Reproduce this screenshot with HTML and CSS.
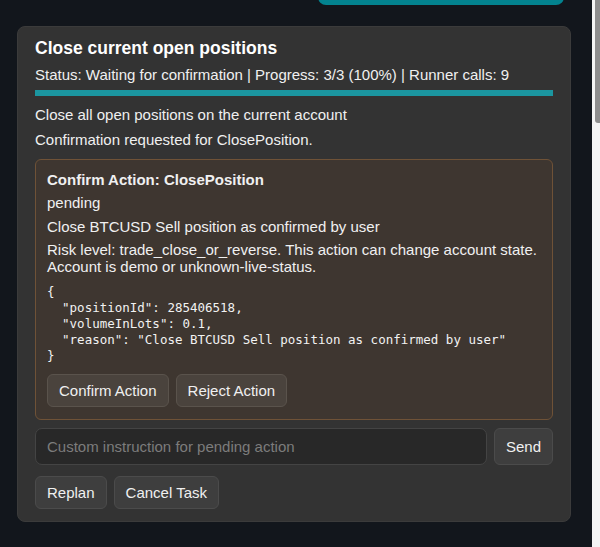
FILE: index.html
```html
<!DOCTYPE html>
<html>
<head>
    <title>Task Runner</title>
    <link rel="stylesheet" href="styles.css">
</head>
<body>
    <div class="page">
        <div class="main">
            <div class="top-bar">
                <div class="primary"></div>
            </div>

            <div class="task-card">
                <h2 class="task-title">Close current open positions</h2>
                <div class="task-status">Status: Waiting for confirmation | Progress: 3/3 (100%) | Runner calls: 9</div>
                <div class="progress"><div class="progress-fill" style="width: 100%"></div></div>
                <div class="task-text">Close all open positions on the current account</div>
                <div class="task-text">Confirmation requested for ClosePosition.</div>

                <div class="confirm-box">
                    <div class="confirm-title">Confirm Action: ClosePosition</div>
                    <div>pending</div>
                    <div>Close BTCUSD Sell position as confirmed by user</div>
                    <div>Risk level: trade_close_or_reverse. This action can change account state. Account is demo or unknown-live-status.</div>
<pre class="args">{
  "positionId": 285406518,
  "volumeInLots": 0.1,
  "reason": "Close BTCUSD Sell position as confirmed by user"
}</pre>
                    <div class="btn-row">
                        <button class="btn btn-warm">Confirm Action</button>
                        <button class="btn btn-warm">Reject Action</button>
                    </div>
                </div>

                <div class="instruction-row">
                    <input type="text" class="instruction" placeholder="Custom instruction for pending action">
                    <button class="btn">Send</button>
                </div>
                <div class="btn-row">
                    <button class="btn">Replan</button>
                    <button class="btn">Cancel Task</button>
                </div>
            </div>
        </div>
        <div class="scrollbar"><div class="scroll-thumb"></div></div>
    </div>
</body>
</html>
```

FILE: styles.css
```css
html, body {
    margin: 0;
    height: 100%;
    overflow: hidden;
}
body {
    background-color: #12161c;
    color: #f0f0f0;
    font-family: "Liberation Sans", Arial, sans-serif;
    font-size: 15px;
}
.page {
    display: flex;
    height: 100%;
}
.main {
    flex: 1;
    padding: 0 21px 0 17px;
}
.scrollbar {
    width: 8px;
    background-color: #f4f4f4;
    display: flex;
    justify-content: flex-end;
}
.scroll-thumb {
    width: 5px;
    height: 123px;
    background-color: #8e8e8e;
    border-bottom-left-radius: 3px;
}
.top-bar {
    display: flex;
    justify-content: flex-end;
    padding-right: 7px;
}
.primary {
    width: 246px;
    height: 38px;
    margin-top: -33px;
    background-color: #03838f;
    border-radius: 8px;
}
.task-card {
    margin-top: 21px;
    background-color: #333333;
    border: 1px solid #3b3b3b;
    border-radius: 8px;
    padding: 11px 17px 12px;
    display: flex;
    flex-direction: column;
}
.task-title {
    margin: 0;
    font-size: 17.5px;
    font-weight: bold;
    color: #ffffff;
}
.task-status {
    margin-top: 7px;
}
.progress {
    margin-top: 7px;
    height: 6px;
    background-color: #2a2a2a;
}
.progress-fill {
    height: 100%;
    background-color: #1b96a0;
}
.task-text {
    margin-top: 8px;
}
.progress + .task-text {
    margin-top: 10px;
}
.confirm-box {
    margin-top: 11px;
    background-color: #3e3630;
    border: 1px solid #6f5237;
    border-radius: 6px;
    padding: 11px 11px 12px;
    display: flex;
    flex-direction: column;
    gap: 6.25px;
}
.confirm-title {
    font-weight: bold;
}
.args {
    margin: 3px 0 4px;
    font-family: "DejaVu Sans Mono", "Liberation Mono", monospace;
    font-size: 12.5px;
    line-height: 16px;
    color: #f2f2f2;
}
.btn-row {
    display: flex;
    gap: 7px;
}
.task-card > .btn-row {
    margin-top: 11px;
}
.btn {
    font-family: inherit;
    font-size: 15px;
    color: #f0f0f0;
    background-color: #3e3e3e;
    border: 1px solid #4b4b4b;
    border-radius: 6px;
    padding: 7px 11px;
    cursor: pointer;
}
.btn-warm {
    background-color: #4a433d;
    border-color: #5a534c;
}
.instruction-row {
    display: flex;
    gap: 7px;
    margin-top: 8px;
}
.instruction {
    flex: 1;
    height: 37px;
    box-sizing: border-box;
    background-color: #282828;
    border: 1px solid #444444;
    border-radius: 7px;
    padding: 0 11px;
    color: #f0f0f0;
    font-family: inherit;
    font-size: 15px;
}
.instruction::placeholder {
    color: #7c7c7c;
}
.instruction-row .btn {
    height: 37px;
}
```
